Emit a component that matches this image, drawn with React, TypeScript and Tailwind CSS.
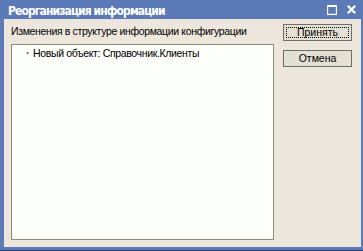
import React from "react"

export default function App() {
  const font = { fontFamily: '"Liberation Sans", Arial, sans-serif' }
  const narrow = { fontFamily: '"Liberation Sans Narrow", "DejaVu Sans Condensed", "Liberation Sans", sans-serif' }
  return (
    <div className="w-[363px] h-[251px] bg-[#5c7ab8] flex flex-col border-b border-[#27406e] overflow-hidden" style={font}>
      <div className="h-[19px] flex items-center pl-[8px] pr-[7px] pt-[3px] shrink-0">
        <span className="text-white font-bold text-[12px] leading-none tracking-[-0.9px]" style={narrow}>Реорганизация информации</span>
        <div className="ml-auto flex items-center gap-[10px] -mt-[3px]">
          <svg width="10" height="10" viewBox="0 0 10 10">
            <path d="M0.5 1 H9.5 V9.5 H0.5 Z" fill="none" stroke="#fff" strokeWidth="1.3" />
            <path d="M0 1 H10" stroke="#fff" strokeWidth="2" />
          </svg>
          <svg width="9" height="9" viewBox="0 0 9 9">
            <path d="M0.8 0.8 L8.2 8.2 M8.2 0.8 L0.8 8.2" stroke="#fff" strokeWidth="2.2" />
          </svg>
        </div>
      </div>
      <div className="flex-1 ml-[4px] mr-[2px] mb-[3px] bg-[#ece6dc] flex pl-[7px] pt-[5px]">
        <div className="w-[263px] flex flex-col">
          <div className="h-[20px] text-[10.5px] text-black leading-[14px] tracking-[-0.35px]">
            Изменения в структуре информации конфигурации
          </div>
          <div className="h-[196px] bg-[#fcfefa] border border-[#8b8a7c] pt-[2px] pl-[14px]">
            <div className="flex items-center text-[10.5px] text-black leading-[13px] tracking-[-0.35px]">
              <span className="w-[7px] text-[#1a3ab0] font-bold">·</span>
              <span>Новый объект: Справочник.Клиенты</span>
            </div>
          </div>
        </div>
        <div className="ml-[9px] flex flex-col gap-[9px]">
          <button className="w-[69px] h-[17px] bg-[#e3dfd3] border border-[#6f6e62] flex items-center justify-center p-[2px]">
            <span className="w-full h-full border border-dotted border-black flex items-center justify-center text-[10.5px] text-black leading-none">
              Принять
            </span>
          </button>
          <button className="w-[69px] h-[17px] bg-[#e3dfd3] border border-[#6f6e62] flex items-center justify-center text-[10.5px] text-black leading-none">
            Отмена
          </button>
        </div>
      </div>
    </div>
  )
}
